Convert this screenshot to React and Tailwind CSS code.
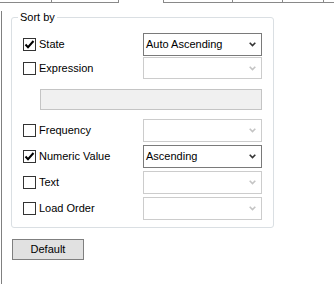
import React from 'react';

const Check = ({ checked }) => (
    <span className="w-[13px] h-[13px] shrink-0 border border-[#333333] bg-white flex items-center justify-center">
        {checked && (
            <svg width="11" height="11" viewBox="0 0 11 11">
                <path d="M1.5 5.5 L4 8.2 L9.5 2" fill="none" stroke="#000" strokeWidth="2" />
            </svg>
        )}
    </span>
);

const Combo = ({ value, enabled }) => (
    <div
        className={
            enabled
                ? 'h-full flex items-center justify-between pl-[2px] pr-[5px] bg-white border border-[#7a7a7a]'
                : 'h-full flex items-center justify-between pl-[2px] pr-[5px] bg-white border border-[#cccccc]'
        }
    >
        <span>{value}</span>
        <svg width="7" height="5" viewBox="0 0 7 5">
            <path
                d="M0.7 0.8 L3.5 3.6 L6.3 0.8"
                fill="none"
                stroke={enabled ? '#333333' : '#c4c4c4'}
                strokeWidth="1.6"
            />
        </svg>
    </div>
);

const Row = ({ label, checked, value, enabled, className }) => (
    <div className={`grid grid-cols-[120px_119px] items-center ${className}`}>
        <label className="flex items-center gap-[3px]">
            <Check checked={checked} />
            <span>{label}</span>
        </label>
        <Combo value={value} enabled={enabled} />
    </div>
);

export default function App() {
    return (
        <div className="w-[334px] h-[284px] bg-white overflow-hidden text-black text-[11px] leading-[13px] font-['Liberation_Sans',Arial,sans-serif]">
            {/* tabs strip */}
            <div className="flex h-[3px]">
                <div className="w-[52px] border-b border-r border-[#898989]" />
                <div className="w-[67px] border-b border-r border-[#898989]" />
                <div className="w-[45px] border-r border-[#898989]" />
                <div className="w-[69px] border-b border-r border-[#898989]" />
                <div className="w-[50px] border-b border-r border-[#898989]" />
                <div className="w-[41px] border-b border-r border-[#898989]" />
                <div className="flex-1 border-b border-[#898989]" />
            </div>

            <div className="ml-[1px] h-[281px] border-l border-[#808080]">
                <fieldset className="ml-[9px] mt-[8px] w-[263px] h-[217px] border border-[#dadfe3] rounded-[3px] px-[11px]">
                    <legend className="ml-[-5px] px-[2px]">Sort by</legend>

                    <div className="flex flex-col mt-[9px]">
                        <Row label="State" checked value="Auto Ascending" enabled className="h-[23px]" />
                        <Row label="Expression" value="" className="h-[22px] mt-[1px]" />
                        <div className="ml-[17px] mt-[10px] w-[222px] h-[21px] bg-[#f0f0f0] border border-[#c4c4c4]" />
                        <Row label="Frequency" value="" className="h-[23px] mt-[9px]" />
                        <Row label="Numeric Value" checked value="Ascending" enabled className="h-[23px] mt-[3px]" />
                        <Row label="Text" value="" className="h-[23px] mt-[3px]" />
                        <Row label="Load Order" value="" className="h-[23px] mt-[3px]" />
                    </div>
                </fieldset>

                <button className="ml-[10px] mt-[11px] w-[72px] h-[21px] bg-[#e1e1e1] border border-[#7f7f7f] flex items-center justify-center">
                    Default
                </button>
            </div>
        </div>
    );
}
